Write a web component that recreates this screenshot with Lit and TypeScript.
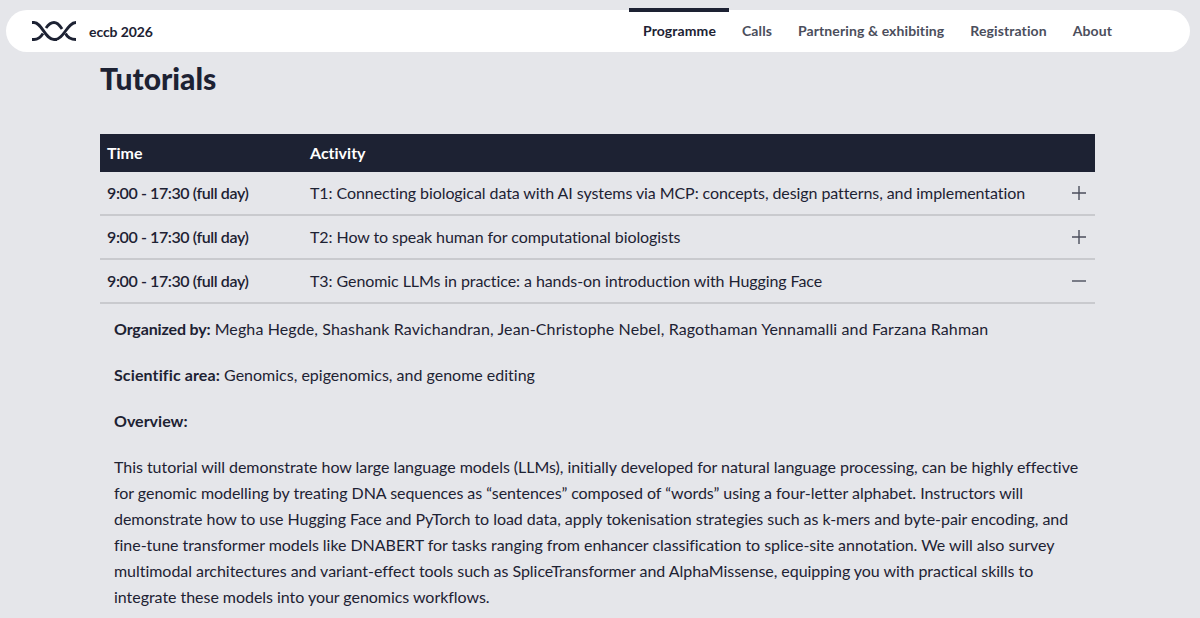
import { LitElement, html, css, svg } from 'lit';
import { customElement } from 'lit/decorators.js';

const NAV = ['Programme', 'Calls', 'Partnering & exhibiting', 'Registration', 'About'];

const ROWS = [
  { id: 'T1: Connecting biological data with AI systems via MCP: concepts, design patterns, and implementation', open: false },
  { id: 'T2: How to speak human for computational biologists', open: false },
  { id: 'T3: Genomic LLMs in practice: a hands-on introduction with Hugging Face', open: true },
];

const OVERVIEW = [
  'This tutorial will demonstrate how large language models (LLMs), initially developed for natural language processing, can be highly effective',
  'for genomic modelling by treating DNA sequences as “sentences” composed of “words” using a four-letter alphabet. Instructors will',
  'demonstrate how to use Hugging Face and PyTorch to load data, apply tokenisation strategies such as k-mers and byte-pair encoding, and',
  'fine-tune transformer models like DNABERT for tasks ranging from enhancer classification to splice-site annotation. We will also survey',
  'multimodal architectures and variant-effect tools such as SpliceTransformer and AlphaMissense, equipping you with practical skills to',
  'integrate these models into your genomics workflows.',
];

const logo = svg`<svg class="logo" width="44" height="20" viewBox="0 0 44 20" fill="none" stroke="#1d2233" stroke-width="2.8">
  <path d="M0 1.5H2C10 1.5 13 18.5 22 18.5H25" />
  <path d="M0 18.5H2C7 18.5 9.5 15 11 12.5" />
  <path d="M14 7C16 4 18 1.5 22 1.5C26 1.5 28 5 30 8" />
  <path d="M44 1.5C35 1.5 32 18.5 23 18.5" />
  <path d="M44 18.5C38 18.5 35 15.5 33.5 12.5" />
</svg>`;

@customElement('app-root')
export class AppRoot extends LitElement {
  static styles = css`
    :host {
      display: block;
      height: 618px;
      overflow: hidden;
      background: #e5e6ea;
      color: #1d2233;
      font-family: Lato, 'Open Sans', sans-serif;
      font-size: 16px;
      font-variant-ligatures: none;
    }

    .top {
      padding: 10px 10px 0 6px;
    }

    nav {
      height: 42px;
      background: #fff;
      border-radius: 21px;
      display: flex;
      align-items: center;
      justify-content: space-between;
      padding: 0 78px 0 26px;
    }

    .brand {
      display: flex;
      align-items: center;
      gap: 13px;
      font-weight: 700;
      font-size: 14px;
      letter-spacing: -0.1px;
    }

    .links {
      display: flex;
      height: 100%;
      gap: 26px;
      font-weight: 700;
      font-size: 14px;
      letter-spacing: 0.1px;
      color: #4b4e5c;
    }

    .links a {
      display: flex;
      align-items: center;
      position: relative;
      padding-bottom: 2px;
    }

    .links a.active {
      color: #1d2233;
    }

    .links a.active::before {
      content: '';
      position: absolute;
      left: -14px;
      right: -13px;
      top: -2px;
      height: 4px;
      background: #1d2233;
    }

    main {
      width: 995px;
      margin-left: 100px;
    }

    h1 {
      margin: 6px 0 36px;
      font-size: 30px;
      line-height: 40px;
      font-weight: 900;
    }

    .head,
    .row {
      display: grid;
      grid-template-columns: 203px 1fr 23px;
      align-items: center;
      padding-left: 7px;
      box-sizing: border-box;
    }

    .head {
      height: 38px;
      background: #1d2233;
      color: #fff;
      font-weight: 700;
      padding-bottom: 2px;
    }

    .row {
      height: 44px;
      padding-bottom: 2px;
      border-bottom: 2px solid #c9cace;
    }

    .row .time {
      font-weight: 600;
      letter-spacing: -0.4px;
    }

    .row .name {
      letter-spacing: -0.08px;
    }

    .row svg {
      justify-self: start;
      margin-top: 2px;
    }

    .detail {
      padding: 12px 0 0 14px;
      line-height: 26px;
      white-space: nowrap;
    }

    .detail p {
      margin: 0 0 20px;
    }

    .detail .label-tight {
      letter-spacing: -0.15px;
    }

    .detail .label-wide {
      letter-spacing: 0.12px;
    }

    .detail .names {
      letter-spacing: 0.12px;
    }

    .detail .overview {
      letter-spacing: -0.04px;
    }
  `;

  render() {
    return html`
      <div class="top">
        <nav>
          <div class="brand">${logo}<span>eccb 2026</span></div>
          <div class="links">
            ${NAV.map((n, i) => html`<a class=${i === 0 ? 'active' : ''}>${n}</a>`)}
          </div>
        </nav>
      </div>
      <main>
        <h1>Tutorials</h1>
        <div class="head"><span>Time</span><span>Activity</span><span></span></div>
        ${ROWS.map(
          (r) => html`
            <div class="row">
              <span class="time">9:00 - 17:30 (full day)</span>
              <span class="name">${r.id}</span>
              <svg width="14" height="14" viewBox="0 0 14 14" stroke="#4b4e5c" stroke-width="1.4" fill="none">
                <path d=${r.open ? 'M0 7H14' : 'M0 7H14M7 0V14'} />
              </svg>
            </div>
          `,
        )}
        <div class="detail">
          <p><b class="label-tight">Organized by:</b> <span class="names">Megha Hegde, Shashank Ravichandran, Jean-Christophe Nebel, Ragothaman Yennamalli and Farzana Rahman</span></p>
          <p><b class="label-wide">Scientific area:</b> Genomics, epigenomics, and genome editing</p>
          <p><b>Overview:</b></p>
          <p class="overview">${OVERVIEW.map((l) => html`${l}<br />`)}</p>
        </div>
      </main>
    `;
  }
}
